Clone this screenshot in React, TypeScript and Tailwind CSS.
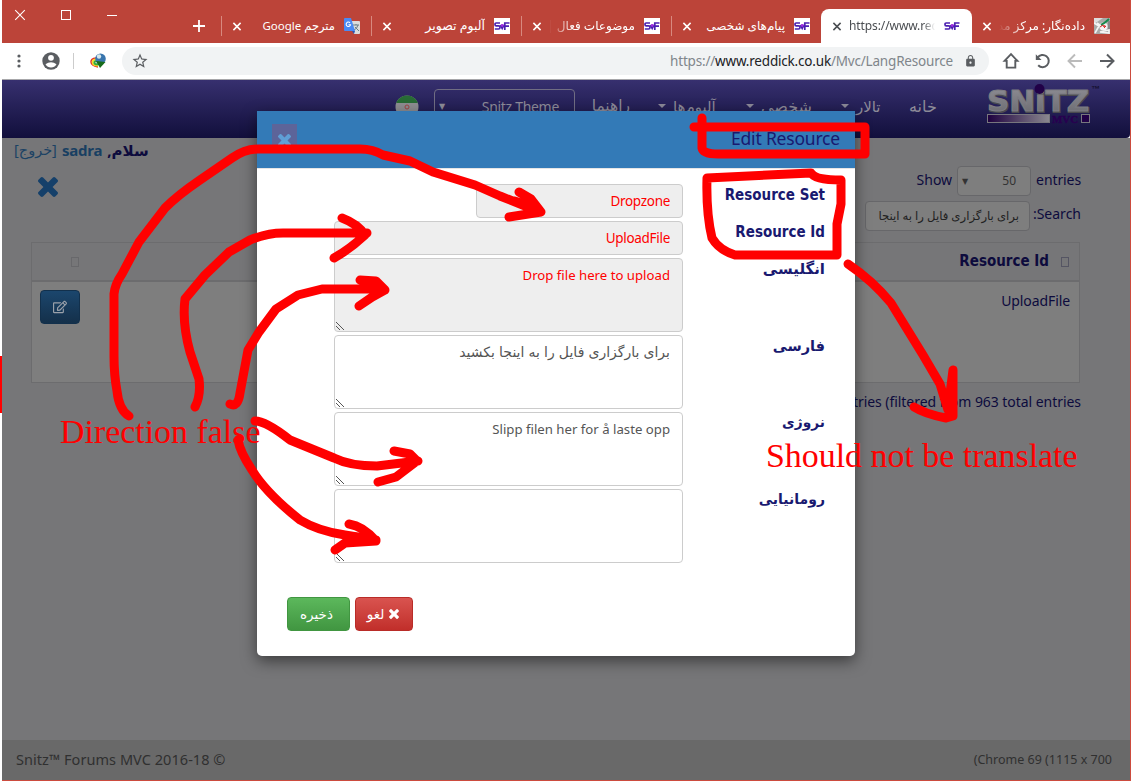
import React from "react";
import { FaRegEdit } from "react-icons/fa";
import { MdLock, MdStarBorder } from "react-icons/md";

function Cross({ className }: { className: string }) {
  return (
    <svg viewBox="110 366 1188 1188" className={className} fill="currentColor">
      <path d="M1298 1322q0 40-28 68l-136 136q-28 28-68 28t-68-28l-294-294-294 294q-28 28-68 28t-68-28l-136-136q-28-28-28-68t28-68l294-294-294-294q-28-28-28-68t28-68l136-136q28-28 68-28t68 28l294 294 294-294q28-28 68-28t68 28l136 136q28 28 28 68t-28 68l-294 294 294 294q28 28 28 68z" />
    </svg>
  );
}

function ThinCross({ className }: { className: string }) {
  return (
    <svg viewBox="0 0 10 10" className={className} stroke="currentColor" fill="none">
      <path d="M1 1L9 9M9 1L1 9" />
    </svg>
  );
}

function SnitzIcon() {
  return (
    <svg viewBox="0 0 16 16" className="h-4 w-4 shrink-0">
      <rect width="16" height="16" fill="#fff" />
      <g fill="none" stroke="#4b1fb0" strokeWidth="1.7">
        <path d="M6 5H2.2Q1 5 1 6.4T2.2 7.8H4.6Q6 7.8 6 9.4T4.6 11H.8" />
        <path d="M15.5 5H10.8V12M10.8 8.2H15" />
        <path d="M6.4 7L8.2 10.5L10 7" />
      </g>
      <circle cx="8.2" cy="7.4" r="1.4" fill="#a12be0" />
    </svg>
  );
}

function TranslateIcon() {
  return (
    <svg viewBox="0 0 16 16" className="h-4 w-4 shrink-0">
      <path d="M7 3h8q1 0 1 1v11q0 1-1 1H10z" fill="#dcdcdc" />
      <path d="M9 7h6M12 6v1M14 7q-1 4-4 5M11 9l4 4" stroke="#6b7f87" fill="none" />
      <path d="M1 0h6l4 13H1q-1 0-1-1V1q0-1 1-1z" fill="#4a8af4" />
      <path d="M8 13h3l-1 3z" fill="#2754b5" />
      <path d="M6 4.8a2.2 2.2 0 1 0 .5 2H4.5" stroke="#fff" fill="none" strokeWidth="1.1" />
    </svg>
  );
}

function PhotoIcon() {
  return (
    <svg viewBox="0 0 16 16" className="h-4 w-4 shrink-0">
      <rect width="16" height="16" fill="#a9aaa8" />
      <path d="M0 0h9L0 6z" fill="#dedede" />
      <path d="M0 5l5 3-4 7M3 5l4 3M6 14l9-2v3z" stroke="#f4f4f4" strokeWidth="1.6" fill="none" />
      <circle cx="9.500" cy="8.500" r="4" fill="#f4f4f4" />
      <path d="M7 7Q11 5 15 1" stroke="#168a4c" strokeWidth="2" fill="none" />
      <path d="M6 9l3-2 1 2 1-2M10 10l2-2" stroke="#d92b2b" fill="none" />
      <path d="M15 3v8" stroke="#666" />
    </svg>
  );
}

function Tab({
  title,
  icon,
  divider = false,
  faded = false,
  textClass = "text-[12px]",
}: {
  title: string;
  icon: React.ReactNode;
  divider?: boolean;
  faded?: boolean;
  textClass?: string;
}) {
  return (
    <div className="mt-[9px] flex h-[34px] w-[150px] shrink-0 items-center pl-[10px] text-white">
      <ThinCross className="h-[9px] w-[10px] stroke-[1.7]" />
      <div
        className={
          faded
            ? "ml-[7px] w-[86px] overflow-hidden [mask-image:linear-gradient(to_right,transparent,black_25px)]"
            : "ml-[7px] w-[86px] overflow-hidden"
        }
      >
        <div dir="rtl" className={"whitespace-nowrap " + textClass}>
          {title}
        </div>
      </div>
      <div className="ml-[9px]">{icon}</div>
      {divider && <div className="ml-[11px] h-5 w-px bg-[#d8897f]" />}
    </div>
  );
}

function Caret() {
  return <span className="h-0 w-0 border-x-4 border-t-4 border-x-transparent border-t-[#8a8897]" />;
}

function Logo() {
  return (
    <svg viewBox="0 0 116 42" className="h-[42px] w-[116px]">
      <defs>
        <linearGradient id="metal" x1="0" y1="0" x2="0" y2="1">
          <stop offset="0" stopColor="#908f96" />
          <stop offset="1" stopColor="#68686e" />
        </linearGradient>
        <linearGradient id="bar">
          <stop offset="0" stopColor="#1e003f" />
          <stop offset="1" stopColor="#8b8990" />
        </linearGradient>
      </defs>
      <g fontFamily="DejaVu Sans" fontWeight="bold" fontSize="28">
        <text x="1.500" y="27.500" textLength="102" lengthAdjust="spacingAndGlyphs" fill="#4a4a50" stroke="#4a4a50" strokeWidth="2">
          SNiTZ
        </text>
        <text x="1" y="26.500" textLength="102" lengthAdjust="spacingAndGlyphs" fill="url(#metal)" stroke="#7d7c83" strokeWidth="1">
          SNiTZ
        </text>
      </g>
      <circle cx="53.500" cy="5" r="5" fill="#210047" />
      <rect x="1.500" y="30.500" width="62" height="8" fill="url(#bar)" stroke="#77767d" />
      <rect x="95.500" y="30.500" width="8" height="8" fill="#210047" stroke="#77767d" />
      <text x="66" y="38.500" fontFamily="Liberation Serif" fontWeight="bold" fontSize="10.500" fill="#270050" stroke="#270050" strokeWidth="0.400" textLength="26" lengthAdjust="spacingAndGlyphs">
        MVC
      </text>
      <text x="105" y="7.500" fontFamily="Liberation Sans" fontWeight="bold" fontSize="9" fill="#15102f">
        ™
      </text>
    </svg>
  );
}

function Grip() {
  return (
    <svg viewBox="0 0 8 8" className="h-2 w-2" stroke="#555" fill="none">
      <path d="M0 0L8 8M0 4L4 8" />
    </svg>
  );
}

const areas = [
  { label: "انگلیسی", text: "Drop file here to upload", locked: true, cls: "text-[13.2px]", labelCls: "text-[15px]" },
  { label: "فارسی", text: "برای بارگزاری فایل را به اینجا بکشید", locked: false, cls: "text-[12.5px] tracking-normal [word-spacing:1px]", labelCls: "text-[14.5px]" },
  { label: "نروژی", text: "Slipp filen her for å laste opp", locked: false, cls: "text-[13.2px]", labelCls: "text-[13.8px]" },
  { label: "رومانیایی", text: "", locked: false, cls: "", labelCls: "text-[14px]" },
];

function Modal() {
  return (
    <div className="absolute left-[257px] top-[111px] h-[545px] w-[598px] overflow-hidden rounded-b-[5px] bg-white text-[#191970]">
      <div className="flex h-[58px] items-start justify-between border-b border-[#e5e5e5] bg-[#337ab7] pl-[15px] pr-[15px]">
        <div className="mt-[13px] flex h-[25px] w-[25px] items-end justify-center bg-[#5d6499] pb-[2px] text-[#5f9fd6]">
          <Cross className="h-[13px] w-[13px]" />
        </div>
        <div className="mt-[15px] text-[17.5px] leading-[25px] tracking-[-0.2px]">Edit Resource</div>
      </div>
      <div className="flex flex-col pt-[15px]">
        <div className="mb-[3px] flex h-[34px] justify-end pr-[30px]">
          <div className="flex w-[207px] items-center justify-end rounded border border-[#ccc] bg-[#eee] pr-3 pt-px text-[13.5px] tracking-[-0.3px] text-[#f00]">
            Dropzone
          </div>
          <div className="w-[142px] whitespace-nowrap pt-[1px] text-right font-['DejaVu_Sans_Condensed','DejaVu_Sans',sans-serif] text-[15px] font-bold leading-5">
            Resource Set
          </div>
        </div>
        <div className="mb-[3px] flex h-[34px] justify-end pr-[30px]">
          <div className="flex w-[349px] items-center justify-end rounded border border-[#ccc] bg-[#eee] pr-3 pt-px text-[13.5px] tracking-[-0.3px] text-[#f00]">
            UploadFile
          </div>
          <div className="w-[142px] whitespace-nowrap pt-[1px] text-right font-['DejaVu_Sans_Condensed','DejaVu_Sans',sans-serif] text-[15px] font-bold leading-5">
            Resource Id
          </div>
        </div>
        {areas.map((a) => (
          <div key={a.label} className="mb-[3px] flex h-[74px] justify-end pr-[30px]">
            <div
              className={
                a.locked
                  ? "flex w-[349px] flex-col justify-between rounded border border-[#ccc] bg-[#eee] text-[#f00]"
                  : "flex w-[349px] flex-col justify-between rounded border border-[#ccc] bg-white text-[#555]"
              }
            >
              {a.label === "فارسی" ? (
                <div dir="rtl" className="h-6 pr-3 pt-[6px] text-[14px] leading-5 [word-spacing:0.5px]">
                  {a.text}
                </div>
              ) : (
                <div dir="rtl" className={"h-6 pr-3 pt-[6px] leading-5 " + a.cls}>
                  {a.text}
                </div>
              )}
              <div className="pb-px pl-px">
                <Grip />
              </div>
            </div>
            <div dir="rtl" className={"w-[142px] font-bold leading-5 " + a.labelCls}>
              {a.label}
            </div>
          </div>
        ))}
      </div>
      <div className="mt-[31px] flex gap-[5px] pl-[30px] text-[13.5px] text-white">
        <div className="flex h-[34px] w-[63px] items-center justify-center rounded border border-[#419641] bg-linear-to-b from-[#5cb85c] to-[#419641] pr-1">
          ذخیره
        </div>
        <div className="flex h-[34px] w-[58px] items-center justify-center gap-[5px] rounded border border-[#b92c28] bg-linear-to-b from-[#d9534f] to-[#c12e2a] pr-[2px]">
          <span>لغو</span>
          <Cross className="h-[10px] w-[10px]" />
        </div>
      </div>
    </div>
  );
}

function Annotations() {
  return (
    <svg viewBox="0 0 1134 781" className="absolute left-0 top-0 h-[781px] w-[1134px]">
      <rect x="0" y="356" width="2" height="57" fill="#f00" />
      <g fill="none" stroke="#f00" strokeWidth="9" strokeLinecap="round" strokeLinejoin="round">
        <path d="M129 416Q119 410 117 391Q114 375 114 356V294Q115 284 122 274L139 242L165 208Q178 195 200 180L232 158Q245 149 258 149H360Q373 149 383 155L410 161L433 172L475 185L500 196L540 212M519 192L531 199L541 212L509 217" />
        <path d="M195 407Q201 396 199 379L190 352Q182 323 185 299L205 275L229 252L250 240Q267 233 283 233H367M342 218Q358 224 365 235Q350 249 334 258" />
        <path d="M230 404Q238 408 240 393L248 350L259 332L276 309L298 295L322 289H384M360 280L376 281L385 290Q371 297 359 306" />
        <path d="M255 421Q266 421 290 440L334 458Q350 466 377 466L418 461M394 451L410 454L417 461L396 477L378 482" />
        <path d="M238 440Q240 452 252 470Q266 493 300 520Q318 531 345 535L376 540M349 524Q363 526 376 541L345 543L335 550" />
        <path d="M519 192L541 212M528 204L515 200M345 535L372 538" strokeWidth="7" />
        <path d="M694 127H865V154H718Q703 154 702 148V118" />
        <path d="M707 178L811 173Q815 180 841 180V204L837 224V255H735Q719 250 712 238Q706 213 707 178" />
        <path d="M848 264Q873 281 891 303L923 355L940 384L948 410L953 370V416L946 418Q925 414 914 407" />
      </g>
      <g fontFamily="Liberation Serif" fontSize="33.900" fill="#f00">
        <text x="60" y="443">Direction false</text>
        <text x="766" y="467">Should not be translate</text>
      </g>
    </svg>
  );
}

export default function App() {
  return (
    <div className="relative h-[781px] w-[1134px] overflow-hidden bg-white pl-[2px] pr-[3px] font-['Noto_Sans','DejaVu_Sans',sans-serif]">
      <div className="flex h-[781px] w-[1129px] flex-col border-b border-r border-[#cc4b3e]">
        <div className="flex h-[43px] shrink-0 bg-[#bc4439] text-white">
          <div className="flex w-[220px] shrink-0 items-start">
            <ThinCross className="ml-[12px] mt-[9px] h-[12px] w-[12px] stroke-[0.9]" />
            <div className="ml-[35px] mt-[10px] h-[10px] w-[10px] border border-white" />
            <div className="ml-[36px] mt-[15px] h-px w-[10px] bg-white" />
            <svg viewBox="0 0 12 12" className="ml-[76px] mt-5 h-3 w-3" stroke="#fff" strokeWidth="1.8">
              <path d="M6 0V12M0 6H12" />
            </svg>
            <div className="ml-auto mt-4 h-5 w-px bg-[#d8897f]" />
          </div>
          <Tab title="مترجم Google" icon={<TranslateIcon />} divider textClass="text-[11.5px]" />
          <Tab title="آلبوم تصویر" icon={<SnitzIcon />} divider textClass="text-[12.5px]" />
          <Tab title="موضوعات فعال |" icon={<SnitzIcon />} divider faded />
          <Tab title="پیام‌های شخصی" icon={<SnitzIcon />} />
          <div className="-ml-px mt-[9px] flex h-[34px] w-[151px] shrink-0 items-center rounded-t-lg bg-white pl-[11px] text-[#4a4d51]">
            <ThinCross className="h-[9px] w-[10px] stroke-[1.7]" />
            <div className="ml-[7px] w-[86px] overflow-hidden whitespace-nowrap text-[12px] tracking-[-0.1px] [mask-image:linear-gradient(to_left,transparent,black_12px)]">
              https://www.red
            </div>
            <div className="ml-[9px]">
              <SnitzIcon />
            </div>
          </div>
          <Tab title="داده‌نگار: مرکز مدی" icon={<PhotoIcon />} faded textClass="text-[12px]" />
        </div>

        <div className="flex h-[37px] shrink-0 items-center border-b border-[#a7a7aa] bg-white text-[#5a5d61]">
          <svg viewBox="0 0 4 14" className="ml-[15px] h-[14px] w-1" fill="currentColor">
            <circle cx="2" cy="2" r="1.600" />
            <circle cx="2" cy="7" r="1.600" />
            <circle cx="2" cy="12" r="1.600" />
          </svg>
          <svg viewBox="0 0 18 18" className="ml-[21px] h-[18px] w-[18px]">
            <circle cx="9" cy="9" r="8.700" fill="currentColor" />
            <circle cx="9" cy="5.800" r="2.900" fill="#fff" />
            <path d="M3.500 12.200Q6 10.300 9 10.300T14.500 12.200Q12.500 15.500 9 15.500T3.500 12.200Z" fill="#fff" />
          </svg>
          <div className="ml-[13px] h-4 w-px bg-[#ccc]" />
          <svg viewBox="0 0 16 16" className="ml-[16px] h-4 w-4">
            <path d="M6 5Q.8 5.500 1 9t7 5" fill="none" stroke="#e63126" strokeWidth="1.500" />
            <path d="M6 6.500Q2.500 6.500 2.600 9.500t5.400 3.200" fill="none" stroke="#f3dc25" strokeWidth="1.800" />
            <path d="M7 8Q4 8 4.400 10t4.600 1" fill="none" stroke="#38a83b" strokeWidth="2" />
            <circle cx="10.500" cy="5.800" r="5.300" fill="#3975ad" />
            <circle cx="9" cy="3.500" r="2.200" fill="#d7e8ed" />
            <path d="M6 8l9.500 1L10 15z" fill="#176b1a" />
          </svg>
          <div className="ml-[16px] flex h-7 w-[867px] items-center rounded-full bg-[#f1f3f4] pl-[9px] pr-3">
            <MdStarBorder className="h-[18px] w-[18px]" />
            <div className="ml-auto mr-[11px] whitespace-nowrap text-[13.5px] tracking-[-0.19px] text-[#80868b]">
              https://<span className="text-[#202124]">www.reddick.co.uk</span>/Mvc/LangResource
            </div>
            <MdLock className="h-[14px] w-[13px]" />
          </div>
          <svg viewBox="0 0 18 18" className="ml-[13px] h-[18px] w-[18px]" fill="none" stroke="currentColor" strokeWidth="1.900">
            <path d="M9 2.200L2.600 8.900H4.700V15.600H13.300V8.900H15.400Z" />
          </svg>
          <svg viewBox="0 0 18 18" className="ml-[14px] h-[18px] w-[18px]">
            <path d="M3.600 5.600A6.100 6.100 0 1 1 4.200 13.200" fill="none" stroke="currentColor" strokeWidth="2" />
            <path d="M1.800 2.200V8H7.600Z" fill="currentColor" />
          </svg>
          <svg viewBox="0 0 16 16" className="ml-[15px] h-4 w-4" fill="none" stroke="#bbb" strokeWidth="1.900">
            <path d="M15 8H2M8 1.500L1.500 8L8 14.500" />
          </svg>
          <svg viewBox="0 0 16 16" className="ml-[16px] h-4 w-4" fill="none" stroke="currentColor" strokeWidth="2">
            <path d="M1 8H14M8 1.500L14.500 8L8 14.500" />
          </svg>
        </div>

        <div className="flex h-[58px] shrink-0 items-start rounded-br bg-linear-to-b from-[#37306f] to-[#120f3c] text-[14px] text-[#8d8b98]">
          <svg viewBox="0 0 24 24" className="ml-[393px] mt-[15px] h-6 w-6">
            <clipPath id="round">
              <circle cx="12" cy="12" r="11.500" />
            </clipPath>
            <g clipPath="url(#round)">
              <rect width="24" height="24" fill="#8d8d91" />
              <rect width="24" height="8" fill="#286b35" />
              <circle cx="12" cy="12" r="2" stroke="#a04444" fill="none" />
            </g>
          </svg>
          <div className="ml-[15px] mt-[9px] flex h-[34px] w-[141px] items-center justify-between rounded border border-[#706d83] pl-[4px] pr-[15px]">
            <span className="text-[8px]">▼</span>
            <span className="text-[14px] tracking-[-0.3px]">Snitz Theme</span>
          </div>
          <div className="mt-[15px] flex h-[22px] items-center">
            <span className="ml-[15px] w-[40px] whitespace-nowrap text-right text-[15.5px]">راهنما</span>
            <span className="ml-[28px] flex">
              <Caret />
            </span>
            <span className="ml-[7px] w-[44px] whitespace-nowrap text-[15px]">آلبوم‌ها</span>
            <span className="ml-[29px] flex">
              <Caret />
            </span>
            <span className="ml-[7px] w-[52px] whitespace-nowrap text-[16px]">شخصی</span>
            <span className="ml-[28px] flex">
              <Caret />
            </span>
            <span className="ml-[7px] w-[26px] whitespace-nowrap text-[15px]">تالار</span>
            <span className="ml-[27px] w-[30px] whitespace-nowrap text-[16px]">خانه</span>
          </div>
          <div className="ml-auto mr-[28px] mt-[4px]">
            <Logo />
          </div>
        </div>

        <div className="flex min-h-0 grow flex-col bg-[#767678] text-[14px] text-[#0d0b3d]">
          <div className="flex h-[24px] shrink-0 items-center whitespace-nowrap pl-3 text-[15px] tracking-[-0.2px]">
            <span className="text-[14.5px] text-[#1c4264]">[خروج]</span>
            <span className="ml-[5px] font-bold text-[#183f62]">sadra</span>
            <span dir="rtl" className="ml-[5px] font-bold tracking-normal">سلام,</span>
          </div>
          <div className="flex h-[33px] shrink-0 items-start justify-between pr-[49px] pt-[2px]">
            <Cross className="ml-[36px] mt-[13px] h-5 w-5 text-[#15406a]" />
            <div className="flex items-center">
              <span className="-mt-[2px]">Show</span>
              <div className="mx-[5px] mt-[2px] flex h-[30px] w-[74px] items-center justify-between rounded border border-[#67676a] bg-[#7e7e7e] pl-1 pr-[14px] text-[12px] text-[#333]">
                <span className="text-[8px]">▼</span>50
              </div>
              <span className="-mt-[2px] tracking-[-0.1px]">entries</span>
            </div>
          </div>
          <div className="mt-[6px] flex h-[30px] shrink-0 items-center justify-end pr-[49px]">
            <div className="mr-px flex h-[30px] w-[165px] items-center justify-end overflow-hidden whitespace-nowrap rounded border border-[#67676a] bg-[#7e7e7e] pr-[10px] text-[11.7px] text-[#222]">
              <span dir="rtl">برای بارگزاری فایل را به اینجا</span>
            </div>
            <span dir="rtl" className="-mt-[5px] w-[50px] text-right">Search:</span>
          </div>
          <div className="ml-[29px] mt-[11px] h-[141px] w-[1049px] shrink-0 border border-[#6c6c6e] bg-[#7e7e7e]">
            <div className="flex h-[39px] items-center justify-between border-b-2 border-[#6c6c6e] bg-[#767678] pl-[39px] pr-[10px]">
              <div className="h-[10px] w-2 border border-[#68686b]" />
              <div className="flex items-center gap-3">
                <span className="font-['DejaVu_Sans_Condensed','DejaVu_Sans',sans-serif] text-[15px] font-bold">Resource Id</span>
                <div className="h-[10px] w-2 border border-[#555563]" />
              </div>
            </div>
            <div className="flex items-start justify-between pl-2 pr-[9px] pt-[8px]">
              <div className="flex h-[34px] w-10 items-center justify-center rounded border border-[#12304c] bg-linear-to-b from-[#1b466d] to-[#14304a] text-[#9aa1aa]">
                <FaRegEdit className="h-[14px] w-[14px]" />
              </div>
              <span className="tracking-[-0.1px]">UploadFile</span>
            </div>
          </div>
          <div className="mt-[8px] whitespace-nowrap pr-[49px] text-right tracking-[-0.05px]">entries (filtered from 963 total entries</div>
          <div className="mt-auto flex h-10 shrink-0 items-center justify-between bg-[#696969] pl-[14px] pr-[18px] text-[#303030]">
            <span className="text-[14.5px] tracking-[0.05px]">Snitz™ Forums MVC 2016-18 ©</span>
            <span className="text-[12.5px]">(Chrome 69 (1115 x 700</span>
          </div>
        </div>
      </div>
      <div className="absolute left-[257px] top-[111px] h-[545px] w-[598px] rounded-[5px] shadow-[0_5px_15px_rgba(0,0,0,0.5)]" />
      <Modal />
      <Annotations />
    </div>
  );
}
